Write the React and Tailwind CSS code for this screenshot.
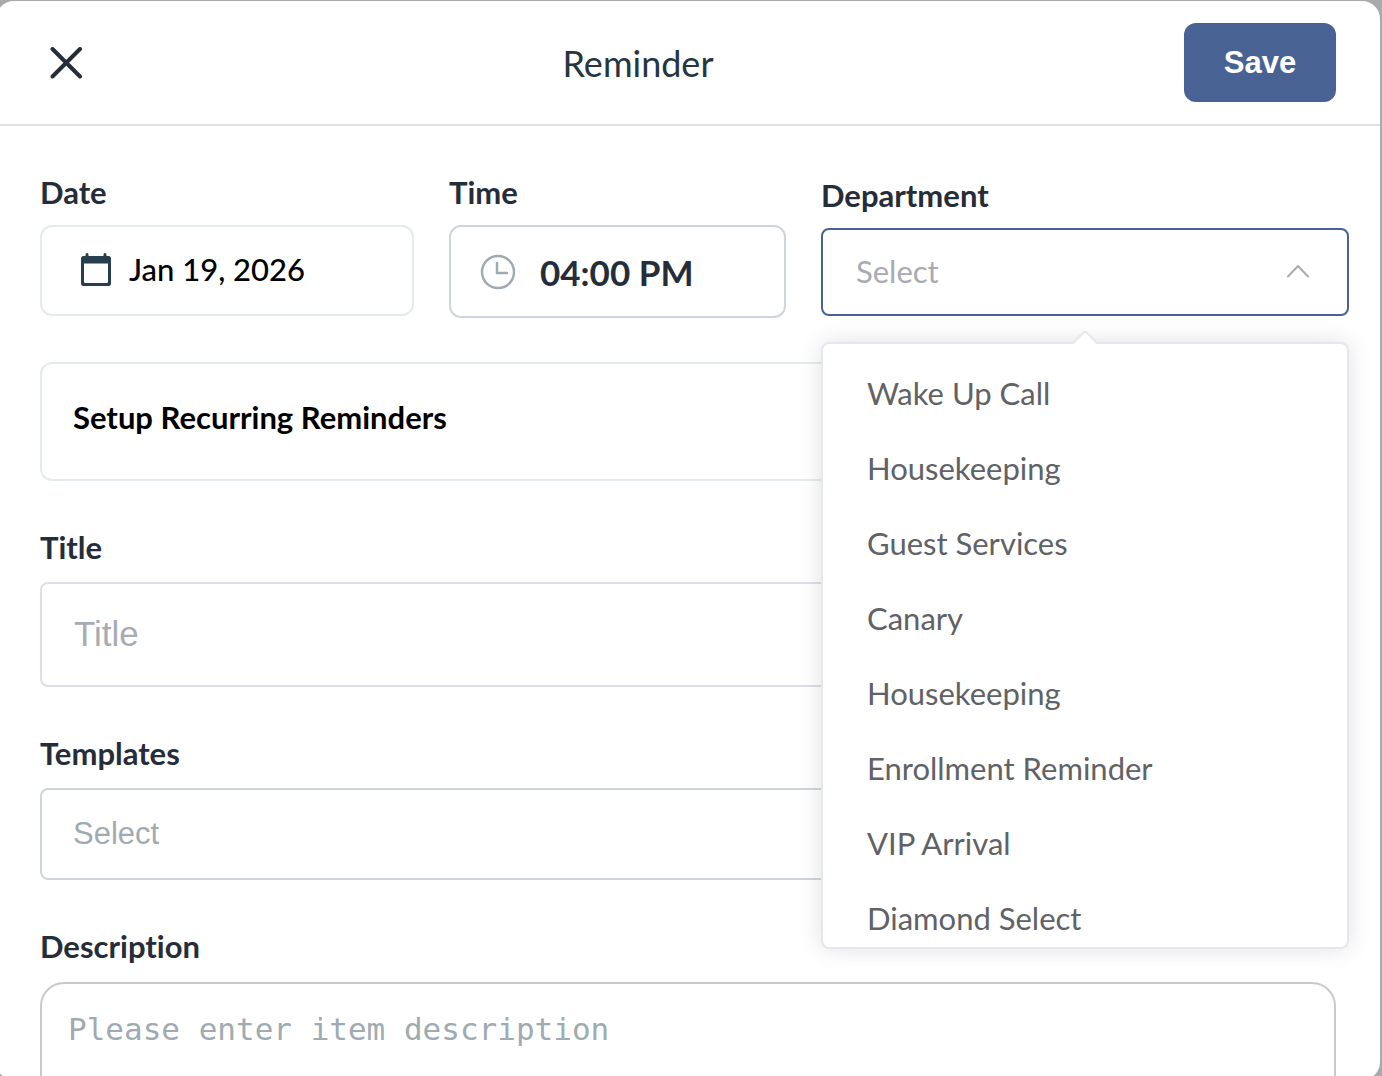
import React, { useState } from "react";

const DEPARTMENTS = [
  "Wake Up Call",
  "Housekeeping",
  "Guest Services",
  "Canary",
  "Housekeeping",
  "Enrollment Reminder",
  "VIP Arrival",
  "Diamond Select",
];

const labelClass = "block text-[31px] leading-10 font-bold text-[#262d38]";

function CalendarIcon() {
  return (
    <svg width="30" height="33" viewBox="0 0 30 33" fill="#263f4d" className="shrink-0" aria-hidden="true">
      <path
        fillRule="evenodd"
        d="M4.500 1.500a1.500 1.500 0 0 1 3 0V3h15V1.500a1.500 1.500 0 0 1 3 0V3H27.500a2.500 2.500 0 0 1 2.500 2.500v25a2.500 2.500 0 0 1-2.500 2.500H2.500a2.500 2.500 0 0 1-2.500-2.500V5.500a2.500 2.500 0 0 1 2.500-2.500h2zM3 10.500V28.500a1.500 1.500 0 0 0 1.500 1.500h21a1.500 1.500 0 0 0 1.500-1.500V10.500z"
      />
    </svg>
  );
}

function ClockIcon() {
  return (
    <svg width="36" height="36" viewBox="0 0 36 36" fill="none" stroke="#9fabb1" className="shrink-0" aria-hidden="true">
      <circle cx="18" cy="18" r="16" strokeWidth="2.500" />
      <path d="M17 9v10h10" strokeWidth="2.500" strokeLinecap="round" strokeLinejoin="round" />
    </svg>
  );
}

function DepartmentMenu({ onPick }) {
  return (
    <div className="absolute top-full left-0 right-0 z-10 mt-[26px] rounded-lg border-2 border-[#e4e7ed] bg-white shadow-[0_0_24px_rgba(0,0,0,0.12)]">
      <svg
        width="28"
        height="14"
        viewBox="0 0 28 14"
        className="absolute left-1/2 -top-3.5 -translate-x-1/2"
        aria-hidden="true"
      >
        <path d="M1 14L12.500 2.500Q14 1 15.500 2.500L27 14" fill="#fff" stroke="#e4e7ed" strokeWidth="2" />
        <path d="M3 14h22" stroke="#fff" strokeWidth="2" />
      </svg>
      <ul role="listbox" aria-label="Department" className="max-h-[603px] overflow-hidden pt-3">
        {DEPARTMENTS.map((name, i) => (
          <li
            key={i}
            role="option"
            aria-selected="false"
            onClick={() => onPick(name)}
            className="h-[75px] cursor-pointer truncate px-11 text-[31px] leading-[75px] text-[#606266]"
          >
            {name}
          </li>
        ))}
      </ul>
    </div>
  );
}

function App() {
  const [open, setOpen] = useState(true);
  const [department, setDepartment] = useState("");

  const pick = (name) => {
    setDepartment(name);
    setOpen(false);
  };

  return (
    <div className="flex h-screen overflow-hidden bg-[#a9aaab] font-['Lato',sans-serif] [font-variant-ligatures:none]">
      <div className="mt-px mr-0.5 -mb-1 -ml-1 flex min-w-0 flex-1 flex-col overflow-hidden rounded-[18px] bg-white">
        <header className="flex shrink-0 items-center justify-between border-b-2 border-[#e0e1e2] pt-[22px] pr-11 pb-[22px] pl-11">
          <button type="button" aria-label="Close" className="flex h-[54px] w-[52px] items-center justify-center">
            <svg width="32" height="32" viewBox="0 0 32 32" stroke="#262d38" strokeWidth="4" strokeLinecap="round" aria-hidden="true">
              <path d="M2.500 2l27.500 27.500M30 2l-27.500 27.500" />
            </svg>
          </button>
          <h1 className="text-[36px] leading-10 text-[#263640]">Reminder</h1>
          <button
            type="button"
            className="h-[79px] w-[152px] rounded-xl bg-[#486294] pt-0.5 font-['Liberation_Sans',sans-serif] text-[31px] font-bold text-white"
          >
            Save
          </button>
        </header>

        <form className="min-h-0 flex-1 overflow-hidden pt-[46px] pl-11">
          <div className="grid grid-cols-[minmax(0,374fr)_minmax(0,337fr)_minmax(0,528fr)] items-start gap-[35px] pr-[31px]">
            <div>
              <label htmlFor="date" className={labelClass}>
                Date
              </label>
              <div className="mt-[13px] flex h-[91px] items-center gap-[18px] rounded-xl border-2 border-[#e5eaea] pb-[3px] pl-[39px]">
                <CalendarIcon />
                <input
                  id="date"
                  defaultValue="Jan 19, 2026"
                  className="min-w-0 flex-1 text-[31px] leading-10 font-medium text-black outline-none"
                />
              </div>
            </div>

            <div>
              <label htmlFor="time" className={labelClass}>
                Time
              </label>
              <div className="mt-[13px] flex h-[93px] items-center gap-6 rounded-xl border-2 border-[#cfd5d9] pl-[29px]">
                <ClockIcon />
                <input
                  id="time"
                  defaultValue="04:00 PM"
                  className="min-w-0 flex-1 text-[35px] leading-10 font-bold text-[#262d38] outline-none"
                />
              </div>
            </div>

            <div className="pt-[3px]">
              <label htmlFor="department" className={labelClass}>
                Department
              </label>
              <div className="relative mt-[13px]">
                <select
                  id="department"
                  value={department}
                  onChange={(e) => pick(e.target.value)}
                  className="block h-[88px] w-full appearance-none rounded-lg border-2 border-[#486294] bg-white px-[33px] pb-0.5 text-[31px] text-[#a8abb2] outline-none"
                >
                  <option value="">Select</option>
                  {DEPARTMENTS.map((name, i) => (
                    <option key={i} value={name}>
                      {name}
                    </option>
                  ))}
                </select>
                <svg
                  width="24"
                  height="14"
                  viewBox="0 0 24 14"
                  fill="none"
                  stroke="#a8abb2"
                  strokeWidth="2"
                  strokeLinecap="round"
                  strokeLinejoin="round"
                  className="pointer-events-none absolute top-9 right-[39px]"
                  aria-hidden="true"
                >
                  <path d="M2 12.500L12 2l10 10.500" />
                </svg>
                {open && <DepartmentMenu onPick={pick} />}
              </div>
            </div>
          </div>

          <div className="pr-11">
            <section className="mt-11 h-[119px] rounded-xl border-2 border-[#e5eaea] px-[31px] pt-[33px]">
              <h2 className="text-[31px] leading-10 font-bold text-black">Setup Recurring Reminders</h2>
            </section>

            <label htmlFor="title" className={`mt-[46px] ${labelClass}`}>
              Title
            </label>
            <input
              id="title"
              placeholder="Title"
              className="mt-[15px] block h-[105px] w-full rounded-lg border-2 border-[#dcdfe6] px-8 pb-0.5 font-['Liberation_Sans',sans-serif] text-[35px] outline-none placeholder:text-[#a8abb2]"
            />

            <label htmlFor="templates" className={`mt-[46px] ${labelClass}`}>
              Templates
            </label>
            <select
              id="templates"
              className="mt-[15px] block h-[92px] w-full appearance-none rounded-lg border-2 border-[#cfd5d9] bg-white px-[31px] font-['Liberation_Sans',sans-serif] text-[31px] text-[#9fabb1] outline-none"
            >
              <option>Select</option>
            </select>

            <label htmlFor="description" className={`mt-[46px] ${labelClass}`}>
              Description
            </label>
            <textarea
              id="description"
              rows="4"
              placeholder="Please enter item description"
              className="mt-4 block w-full resize-none rounded-3xl border-2 border-[#c8c9ca] px-[26px] py-[25px] font-['DejaVu_Sans_Mono',monospace] text-[31px] leading-10 outline-none placeholder:text-[#9fabb1]"
            />
          </div>
        </form>
      </div>
    </div>
  );
}

export default App;
